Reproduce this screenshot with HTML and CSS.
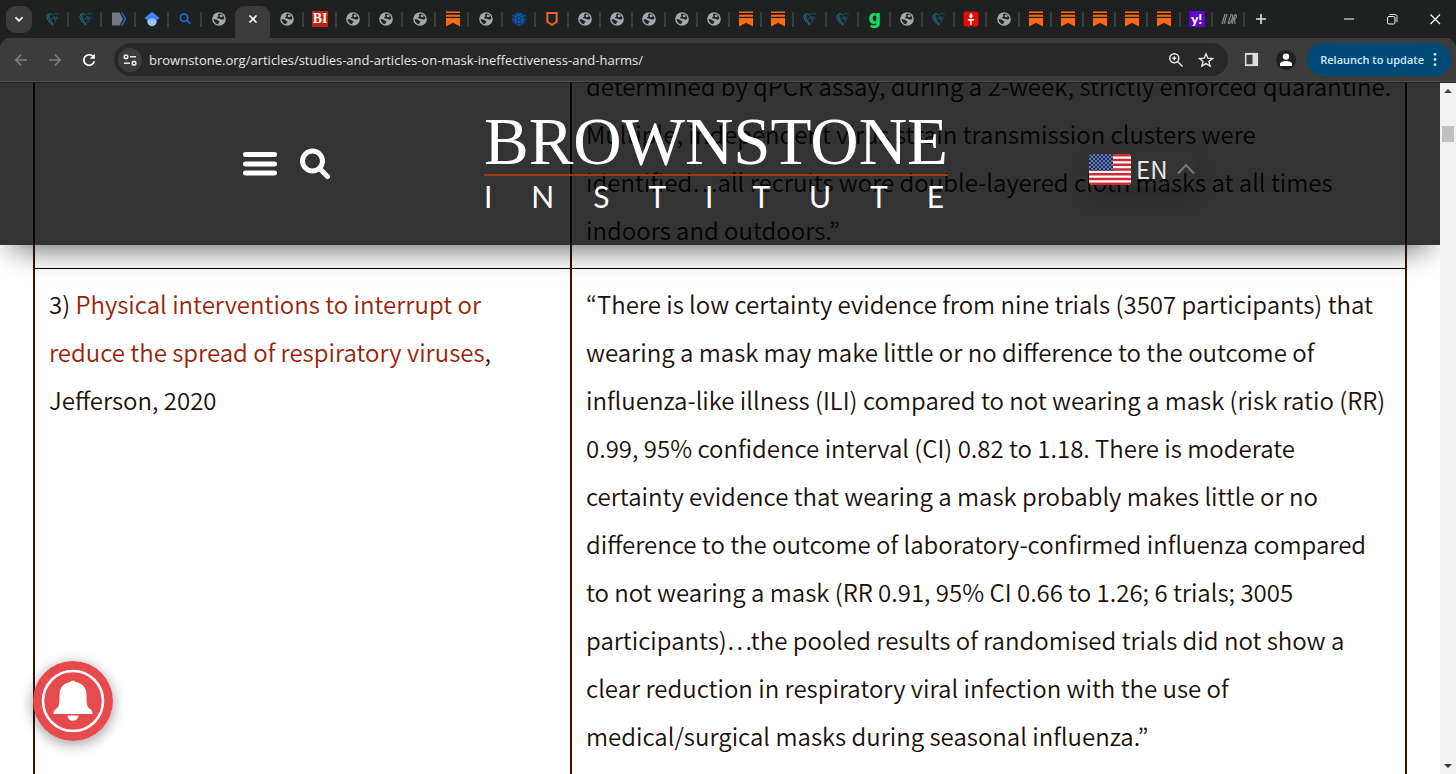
FILE: index.html
```html
<!DOCTYPE html>
<html lang="en">
<head>
  <meta charset="utf-8">
  <title>Studies and Articles on Mask Ineffectiveness and Harms</title>
  <link rel="stylesheet" href="styles.css">
</head>
<body>
  <svg class="sprite" aria-hidden="true">
    <symbol id="globe" viewBox="0 0 16 16">
      <circle cx="8" cy="8" r="6.800" fill="#a3a8b0"/>
      <path d="M8.300 2.500c-1.500.5-1.700 1.300-.9 2 .9.900-.9 1.200-1.300 2-.2.700.500 1.100 1.700 1.100 1.500 0 1.600 1 2.900 1 1 0 1.400-.6 2.600-.7C13.200 4.700 11 2.500 8.300 2.500z" fill="#1f2020"/>
      <path d="M2.600 8.300c1.200-.3 2.900.1 3.800.9.800.7 2 .6 2 1.500 0 .9-1.200 1-1.300 2.500-2.500-.3-4.300-2.300-4.500-4.900z" fill="#1f2020"/>
      <path d="M9.500 3.200l2.500 1.600-.9 1.200-1.900.3-.6-1.200z" fill="#a3a8b0"/>
    </symbol>
    <symbol id="heart" viewBox="0 0 16 16">
      <path d="M8 14C4.500 11.300 2 8.700 2 5.600 2 3 5.300 1.500 7.600 4.300M4 3.600C3.300 6.500 5 10 8.400 13.200" fill="none" stroke="#1d7f9b" stroke-width="1"/>
      <path d="M7.600 4.300C9.500 1.700 13 2.300 14 3.500M6 8l2-.4 1-2.600 1 4.500 1.300-4 .8 2.500 1.600-.5M9.300 11.500l2.200-1.700" fill="none" stroke="#18536b" stroke-width="1"/>
    </symbol>
    <symbol id="ribbon" viewBox="0 0 16 16">
      <path d="M1 .5h14V2H1zM1 3.700h14v2H1zM1 7h14v8.500L8 11.800 1 15.500z" fill="#ff6719"/>
    </symbol>
    <symbol id="dart" viewBox="0 0 16 16">
      <path d="M1 1.500h7.500L12 8l-3.500 6.500H1z" fill="#75797d"/>
      <path d="M10.500 1.500L14.500 8l-4 6.500" fill="none" stroke="#1d5ea8" stroke-width="1.800"/>
    </symbol>
    <symbol id="scholar" viewBox="0 0 16 16">
      <circle cx="8" cy="10.500" r="4.700" fill="#a0c3ff"/>
      <path d="M8 .8l7.500 6.200L12 9.500C10.500 6.900 5.500 6.900 4 9.500L.5 7z" fill="#4285f4"/>
    </symbol>
    <symbol id="lens" viewBox="0 0 16 16">
      <path d="M10 9.500L13.500 13M10.700 6.700a3.700 3.700 0 1 1-7.400 0 3.700 3.700 0 0 1 7.400 0z" fill="none" stroke="#1a73d8" stroke-width="1.600"/>
    </symbol>
    <symbol id="cube" viewBox="0 0 16 16">
      <path d="M8 1l6.500 3v8L8 15.200 1.500 12V4z" fill="#0b3c78"/>
      <path d="M1.500 4L8 7l6.500-3M8 7v8M5 2.500l6.500 3v8M11 2.500l-6.500 3v8M1.500 8L8 11l6.500-3" fill="none" stroke="#1b65b5" stroke-width="1" stroke-dasharray="2 1"/>
    </symbol>
    <symbol id="shield" viewBox="0 0 16 16">
      <path d="M3.300 2h9.400v8.800L8 14l-4.700-3.200z" fill="none" stroke="#f0632a" stroke-width="2"/>
    </symbol>
    <symbol id="torch" viewBox="0 0 16 16">
      <rect x=".5" y=".5" width="15" height="15" rx="2.500" fill="#ee0707"/>
      <path d="M8 2c2 2 2.300 4.500 0 5.500C5.700 6.500 6 4 8 2zM4.500 8h7l-1 1.700H9L8.600 14H7.400L7 9.700H5.500z" fill="#fff"/>
    </symbol>
  </svg>

  <div class="tab-strip">
    <button class="tab-search" aria-label="Search tabs"><svg viewBox="0 0 16 16"><path d="M4.500 6.300L8 9.800l3.500-3.500" fill="none" stroke="#fff" stroke-width="1.800"/></svg></button>
    <div class="tabs">
      <button class="tab" aria-label="Tab"><svg><use href="#heart"/></svg></button>
      <button class="tab" aria-label="Tab"><svg><use href="#heart"/></svg></button>
      <button class="tab" aria-label="Tab"><svg><use href="#dart"/></svg></button>
      <button class="tab" aria-label="Tab"><svg><use href="#scholar"/></svg></button>
      <button class="tab" aria-label="Tab"><svg><use href="#lens"/></svg></button>
      <button class="tab last" aria-label="Tab"><svg><use href="#globe"/></svg></button>
      <button class="tab active" aria-label="Close tab"><svg viewBox="0 0 16 16"><path d="M4.500 4.500l7 7M11.500 4.500l-7 7" stroke="#fff" stroke-width="1.600"/></svg></button>
      <button class="tab" aria-label="Tab"><svg><use href="#globe"/></svg></button>
      <button class="tab" aria-label="Tab"><span class="fav fav-bi">BI</span></button>
      <button class="tab" aria-label="Tab"><svg><use href="#globe"/></svg></button>
      <button class="tab" aria-label="Tab"><svg><use href="#globe"/></svg></button>
      <button class="tab" aria-label="Tab"><svg><use href="#globe"/></svg></button>
      <button class="tab" aria-label="Tab"><svg><use href="#ribbon"/></svg></button>
      <button class="tab" aria-label="Tab"><svg><use href="#globe"/></svg></button>
      <button class="tab" aria-label="Tab"><svg><use href="#cube"/></svg></button>
      <button class="tab" aria-label="Tab"><svg><use href="#shield"/></svg></button>
      <button class="tab narrow" aria-label="Tab"><svg><use href="#globe"/></svg></button>
      <button class="tab narrow" aria-label="Tab"><svg><use href="#globe"/></svg></button>
      <button class="tab narrow" aria-label="Tab"><svg><use href="#globe"/></svg></button>
      <button class="tab narrow" aria-label="Tab"><svg><use href="#globe"/></svg></button>
      <button class="tab narrow" aria-label="Tab"><svg><use href="#globe"/></svg></button>
      <button class="tab narrow" aria-label="Tab"><svg><use href="#ribbon"/></svg></button>
      <button class="tab narrow" aria-label="Tab"><svg><use href="#ribbon"/></svg></button>
      <button class="tab narrow" aria-label="Tab"><svg><use href="#heart"/></svg></button>
      <button class="tab narrow" aria-label="Tab"><svg><use href="#heart"/></svg></button>
      <button class="tab narrow" aria-label="Tab"><span class="fav fav-g">g</span></button>
      <button class="tab narrow" aria-label="Tab"><svg><use href="#globe"/></svg></button>
      <button class="tab narrow" aria-label="Tab"><svg><use href="#heart"/></svg></button>
      <button class="tab narrow" aria-label="Tab"><svg><use href="#torch"/></svg></button>
      <button class="tab narrow" aria-label="Tab"><svg><use href="#globe"/></svg></button>
      <button class="tab narrow" aria-label="Tab"><svg><use href="#ribbon"/></svg></button>
      <button class="tab narrow" aria-label="Tab"><svg><use href="#ribbon"/></svg></button>
      <button class="tab narrow" aria-label="Tab"><svg><use href="#ribbon"/></svg></button>
      <button class="tab narrow" aria-label="Tab"><svg><use href="#ribbon"/></svg></button>
      <button class="tab narrow" aria-label="Tab"><svg><use href="#ribbon"/></svg></button>
      <button class="tab narrow" aria-label="Tab"><span class="fav fav-y">y!</span></button>
      <button class="tab narrow" aria-label="Tab"><svg viewBox="0 0 16 16"><path d="M4 3L1 13M6 3L3 13M7 12.500L10 3.500c2.500 0 2 2 1 5s-2 4-4 4M11 13l3-9.500c2.500 0 1.500 4-.5 4.500l.5 5" fill="none" stroke="#8a8c8e" stroke-width="1.200"/></svg></button>
    </div>
    <button class="new-tab" aria-label="New tab"><svg viewBox="0 0 16 16"><path d="M8 3v10M3 8h10" stroke="#e3e3e3" stroke-width="1.600"/></svg></button>
    <div class="window-controls">
      <button aria-label="Minimize"><svg viewBox="0 0 16 16"><path d="M3 8h10" stroke="#fff"/></svg></button>
      <button aria-label="Restore"><svg viewBox="0 0 16 16"><path d="M5.500 3.500h5.500q2 0 2 2V11" fill="none" stroke="#ddd"/><rect x="3.500" y="5.500" width="7.500" height="7.500" rx="1.500" fill="none" stroke="#fff"/></svg></button>
      <button aria-label="Close"><svg viewBox="0 0 16 16"><path d="M3.500 3.500l9.500 9.500M13 3.500L3.500 13" stroke="#fff" stroke-width="1.200"/></svg></button>
    </div>
  </div>

  <div class="toolbar">
    <div class="nav-buttons">
      <button aria-label="Back"><svg viewBox="0 0 16 16"><path d="M14 8H3M8 2.800L2.800 8 8 13.200" fill="none" stroke="#808080" stroke-width="1.500"/></svg></button>
      <button aria-label="Forward"><svg viewBox="0 0 16 16"><path d="M2 8h11M8 2.800L13.200 8 8 13.200" fill="none" stroke="#808080" stroke-width="1.500"/></svg></button>
      <button aria-label="Reload"><svg viewBox="0 0 16 16"><path d="M13.300 9.200A5.300 5.300 0 1 1 12.300 4.800" fill="none" stroke="#fff" stroke-width="1.700"/><path d="M13.800 1.800v5H8.800z" fill="#fff"/></svg></button>
    </div>
    <div class="omnibox">
      <button class="site-info" aria-label="Site information"><svg viewBox="0 0 16 16"><g fill="none" stroke="#e8e8e8" stroke-width="1.600"><circle cx="4" cy="4.800" r="1.800"/><path d="M8 4.800h6M2 11.200h6"/><circle cx="12" cy="11.200" r="1.800"/></g></svg></button>
      <input type="text" aria-label="Address" value="brownstone.org/articles/studies-and-articles-on-mask-ineffectiveness-and-harms/">
      <button aria-label="Zoom"><svg viewBox="0 0 16 16"><path d="M9.800 9.800l4.700 4.700M10.800 6.300a4.500 4.500 0 1 1-9 0 4.500 4.500 0 0 1 9 0zM6.300 4.300v4M4.300 6.300h4" fill="none" stroke="#e8e8e8" stroke-width="1.500"/></svg></button>
      <button aria-label="Bookmark"><svg viewBox="0 0 16 16"><path d="M8 1.800l1.800 4.400 4.700.3-3.600 3 1.200 4.600L8 11.600l-4.100 2.500 1.200-4.600-3.600-3 4.700-.3z" fill="none" stroke="#e8e8e8" stroke-width="1.400"/></svg></button>
    </div>
    <button class="side-panel" aria-label="Side panel"><svg viewBox="0 0 16 16"><path d="M1 1h14v14H1z" fill="#ddd"/><path d="M2.600 3h6.500v10H2.600z" fill="#3c3c3c"/></svg></button>
    <button class="profile" aria-label="Profile"><svg viewBox="0 0 20 20"><circle cx="10" cy="10" r="10" fill="#202124"/><circle cx="10" cy="6.600" r="3.200" fill="#fff"/><path d="M4 16v-2c0-4 12-4 12 0v2z" fill="#fff"/></svg></button>
    <button class="relaunch">Relaunch to update <svg viewBox="0 0 4 16"><g fill="#d3e9fc"><circle cx="2" cy="2.500" r="1.500"/><circle cx="2" cy="8" r="1.500"/><circle cx="2" cy="13.500" r="1.500"/></g></svg></button>
  </div>

  <div class="viewport">
    <div class="page">
      <table class="studies">
        <tr>
          <td></td>
          <td>determined by qPCR assay, during a 2-week, strictly enforced quarantine. Multiple, independent virus strain transmission clusters were <span class="nowrap">identified…all</span> recruits wore double-layered cloth masks at all times indoors and outdoors.”</td>
        </tr>
        <tr>
          <td>3) <a href="#">Physical interventions to interrupt or reduce the spread of respiratory viruses</a>, Jefferson, 2020</td>
          <td>“There is low certainty evidence from nine trials (3507 participants) that wearing a mask may make little or no difference to the outcome of influenza-like illness (ILI) compared to not wearing a mask (risk ratio (RR) 0.99, 95% confidence interval (CI) 0.82 to 1.18. There is moderate certainty evidence that wearing a mask probably makes little or no difference to the outcome of laboratory-confirmed influenza compared to not wearing a mask (RR 0.91, 95% CI 0.66 to 1.26; 6 trials; 3005 participants)…the pooled results of randomised trials did not show a clear reduction in respiratory viral infection with the use of medical/surgical masks during seasonal influenza.”</td>
        </tr>
      </table>

      <header class="site-header">
        <div class="header-tools">
          <button aria-label="Menu"><svg class="menu-icon" viewBox="0 0 34 24"><path d="M2.500 2.500h29M2.500 12h29M2.500 21h29" stroke="#fff" stroke-width="5" stroke-linecap="round"/></svg></button>
          <button aria-label="Search"><svg class="search-icon" viewBox="0 0 30 32"><circle cx="12.500" cy="13" r="10" fill="none" stroke="#fff" stroke-width="5"/><path d="M20.500 21.500l7 7" stroke="#fff" stroke-width="5" stroke-linecap="round"/></svg></button>
        </div>
        <a class="logo" href="#">
          <span class="logo-name">BROWNSTONE</span>
          <span class="logo-sub"><span>I</span><span>N</span><span>S</span><span>T</span><span>I</span><span>T</span><span>U</span><span>T</span><span>E</span></span>
        </a>
        <button class="language">
          <svg class="flag" viewBox="0 0 42 31">
            <defs>
              <clipPath id="flag-clip"><rect width="42" height="31" rx="4"/></clipPath>
              <pattern id="stars" width="4" height="4" patternUnits="userSpaceOnUse"><circle cx="1" cy="1" r=".7" fill="#fff"/><circle cx="3" cy="3" r=".7" fill="#fff"/></pattern>
            </defs>
            <g clip-path="url(#flag-clip)">
              <path d="M0 0h42v31H0z" fill="#fff"/>
              <path d="M0 1.200h42M0 6h42M0 10.800h42M0 15.500h42M0 20.200h42M0 25h42M0 29.800h42" stroke="#ce2b37" stroke-width="2.400"/>
              <path d="M0 0h24v16.700H0z" fill="#1b2f6b"/>
              <path d="M0 0h24v16.700H0z" fill="url(#stars)"/>
            </g>
          </svg>
          EN
          <svg class="caret" viewBox="0 0 18 12"><path d="M1 10.500L9 2l8 8.500" fill="none" stroke="#777" stroke-width="2"/></svg>
        </button>
      </header>

      <button class="bell" aria-label="Notifications">
        <svg viewBox="0 0 80 80">
          <circle cx="40" cy="40" r="40" fill="#e64a4d"/>
          <circle cx="40" cy="40" r="30" fill="none" stroke="#fff" stroke-width="2.600"/>
          <path d="M37.300 21c.7-1.800 4.700-1.800 5.400 0 7.600 1.500 10.800 6.300 10.800 13 0 8 .3 11.500 3 13.500 2 1.500 3 2.200 3 5.500h-39c0-3.300 1-4 3-5.500 2.700-2 3-5.500 3-13.500 0-6.700 3.200-11.500 10.800-13zM34.500 54.500h11c-.5 7-10.500 7-11 0z" fill="#fff"/>
        </svg>
      </button>
    </div>
    <div class="scrollbar">
      <svg viewBox="0 0 16 16"><path d="M4 10h8L8 6z" fill="#444"/></svg>
      <div class="thumb"></div>
      <svg viewBox="0 0 16 16"><path d="M4 6h8l-4 4z" fill="#333"/></svg>
    </div>
  </div>
</body>
</html>
```

FILE: styles.css
```css
* {
  box-sizing: border-box;
}

body {
  display: flex;
  flex-direction: column;
  height: 100vh;
  margin: 0;
  overflow: hidden;
  font-family: "Noto Sans CJK KR", "Noto Sans", sans-serif;
  background: #1f2120;
}

button {
  display: flex;
  align-items: center;
  justify-content: center;
  padding: 0;
  border: 0;
  background: none;
  font-family: inherit;
}

svg {
  width: 16px;
  height: 16px;
  flex-shrink: 0;
}

.sprite {
  display: none;
}

/* tab strip */

.tab-strip {
  display: flex;
  align-items: center;
  height: 38px;
}

.tab-search {
  width: 26px;
  height: 27px;
  margin: 0 4px 0 6px;
  border-radius: 9px;
  background: #3c3c3c;
}

.tabs {
  display: flex;
  flex: 1;
  align-self: stretch;
}

.tab {
  flex: 1 1 33px;
  position: relative;
}

.tab.narrow {
  flex-basis: 32px;
}

.tab::after {
  content: '';
  position: absolute;
  right: 0;
  top: 12px;
  width: 2px;
  height: 15px;
  background: #3c3c3c;
}

.tab.last::after,
.tab.active::after {
  display: none;
}

.tab.active {
  flex-basis: 35px;
  align-self: flex-end;
  height: 32px;
  padding-bottom: 6px;
  border-radius: 9px 9px 0 0;
  background: #3c3c3c;
}

.fav {
  width: 16px;
  height: 16px;
  color: #fff;
  font-size: 15px;
  line-height: 15px;
  text-align: center;
}

.fav-bi {
  background: #c4210f;
  font-family: "Liberation Serif", serif;
  font-weight: 700;
  font-size: 14px;
}

.fav-g {
  color: #12d867;
  font-family: Roboto, sans-serif;
  font-size: 21px;
  font-weight: 900;
  line-height: 12px;
}

.fav-y {
  background: #5f01d1;
  font-family: Lato, sans-serif;
  font-size: 14px;
  font-weight: 900;
}

.new-tab {
  width: 32px;
  height: 32px;
  margin-right: 50px;
}

.window-controls {
  display: flex;
}

.window-controls button {
  width: 43px;
  height: 32px;
}

/* toolbar */

.toolbar {
  display: flex;
  align-items: center;
  height: 44px;
  padding-right: 5px;
  border-radius: 10px 10px 0 0;
  border-bottom: 1px solid #4a4c4b;
  background: #3c3c3c;
}

.nav-buttons {
  display: flex;
  padding: 0 8px 0 4px;
}

.nav-buttons button {
  width: 34px;
  height: 34px;
}

.omnibox {
  display: flex;
  flex: 1;
  align-items: center;
  height: 33px;
  padding: 0 7px 0 4px;
  border-radius: 17px;
  background: #282828;
}

.omnibox button {
  width: 30px;
  height: 30px;
}

.omnibox .site-info {
  width: 24px;
  height: 24px;
  border-radius: 50%;
  background: #3c3c3c;
}

.omnibox input {
  flex: 1;
  min-width: 0;
  padding: 0 0 0 7px;
  border: 0;
  outline: 0;
  background: none;
  color: #e6e6e6;
  font-family: "Open Sans", sans-serif;
  font-size: 13px;
}

.side-panel {
  margin-left: 16px;
}

.side-panel svg {
  width: 15px;
  height: 15px;
}

.profile {
  margin: 0 11px 0 17px;
}

.profile svg {
  width: 20px;
  height: 20px;
}

.relaunch {
  gap: 9px;
  height: 33px;
  padding: 0 14px 0 13px;
  border-radius: 17px;
  background: #004a77;
  color: #d3e9fc;
  font-family: "Open Sans", sans-serif;
  font-size: 11px;
  font-weight: 600;
}

.relaunch svg {
  width: 4px;
  height: 15px;
}

/* page */

.viewport {
  display: flex;
  flex: 1;
  min-height: 0;
  border-top: 1px solid #222;
  background: #fff;
}

.page {
  position: relative;
  flex: 1;
  overflow: hidden;
  padding: 0 33px;
}

.studies {
  width: 100%;
  margin-top: -33px;
  border-collapse: collapse;
  table-layout: fixed;
  color: #1c0f0a;
  font-size: 24px;
  font-weight: 350;
  line-height: 48px;
}

.studies td {
  padding: 11px 12px 14px 14px;
  border: 1px solid #000;
  border-width: 1px 2px;
  border-color: #000 #34150a;
  vertical-align: top;
}

.studies td:first-child {
  width: 537px;
}

.studies a {
  color: #9c1f08;
  text-decoration: none;
}

.nowrap {
  white-space: nowrap;
}

.site-header {
  display: grid;
  grid-template-columns: 1fr auto 1fr;
  align-items: center;
  position: absolute;
  top: 0;
  left: 0;
  right: 0;
  height: 162px;
  padding-right: 8px;
  background: rgba(0, 0, 0, 0.8);
  box-shadow: 0 16px 28px -12px rgba(0, 0, 0, 0.6);
}

.header-tools {
  display: flex;
  gap: 23px;
  padding-left: 243px;
}

.menu-icon {
  width: 34px;
  height: 24px;
}

.search-icon {
  width: 30px;
  height: 32px;
}

.logo {
  display: block;
  color: #fff;
  text-decoration: none;
}

.logo-name {
  display: block;
  padding-bottom: 6px;
  border-bottom: 2px solid #a33912;
  font-family: "Liberation Serif", serif;
  font-size: 67px;
  line-height: 54px;
}

.logo-sub {
  display: flex;
  justify-content: space-between;
  padding: 2px 4px 0 0;
  font-family: Lato, sans-serif;
  font-size: 30px;
  line-height: 36px;
}

.language {
  gap: 5px;
  justify-self: start;
  margin-top: 10px;
  margin-left: 141px;
  color: #e6e6e6;
  font-size: 24px;
  line-height: 36px;
  box-shadow: 0 10px 20px rgba(0, 0, 0, 0.15);
}

.flag {
  width: 42px;
  height: 31px;
}

.caret {
  width: 18px;
  height: 12px;
  margin-left: 4px;
}

.bell {
  position: absolute;
  left: 33px;
  bottom: 33px;
  border-radius: 50%;
  box-shadow: 0 3px 14px rgba(0, 0, 0, 0.4);
}

.bell svg {
  width: 80px;
  height: 80px;
}

.scrollbar {
  display: flex;
  flex-direction: column;
  align-items: center;
  width: 16px;
  background: #f1f1f1;
}

.scrollbar .thumb {
  width: 12px;
  height: 16px;
  margin: 27px 0 auto;
  background: #c1c1c1;
}
```
